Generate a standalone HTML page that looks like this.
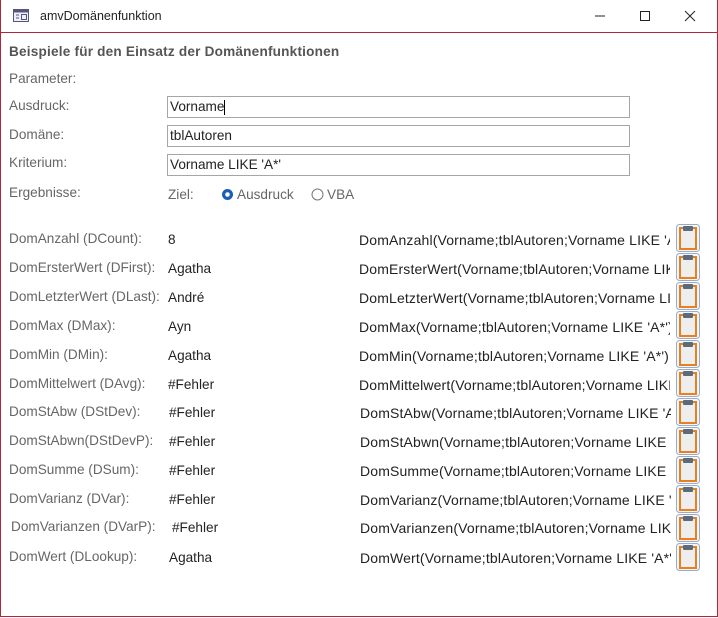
<!DOCTYPE html>
<html><head><meta charset="utf-8"><style>
body{margin:0;width:718px;height:618px;background:#fff;font-family:"Liberation Sans",sans-serif;position:relative;overflow:hidden}
.win{position:absolute;left:0;top:0;width:716px;height:616px;border:1px solid #b3263a;border-top:none}
.t{position:absolute;font-size:13.6px;white-space:nowrap}
.lbl{color:#666}
.val{color:#222}
.box{position:absolute;left:167px;width:459px;height:20px;border:1px solid #a6a6a6;font-size:13.6px;line-height:20px;padding-left:2px;color:#222}
.formula{position:absolute;left:359px;width:311px;overflow:hidden;font-size:14px;letter-spacing:0.15px;white-space:nowrap;color:#222}
</style></head><body>
<div class="win"></div>
<div style="position:absolute;left:1px;top:32px;width:716px;height:1px;background:#b3263a"></div>
<svg style="position:absolute;left:13px;top:9px" width="16" height="13"><rect x="0.5" y="0.5" width="15" height="12" fill="#eef" stroke="#557"/><rect x="0.5" y="0.5" width="15" height="3" fill="#557"/><line x1="3" y1="6" x2="6" y2="6" stroke="#557"/><line x1="3" y1="9" x2="6" y2="9" stroke="#557"/><rect x="8.5" y="5.5" width="5" height="5" fill="none" stroke="#557"/></svg>
<div class="t" style="left:40px;top:9px;font-size:12.5px;color:#222">amvDomänenfunktion</div>
<svg style="position:absolute;left:590px;top:8px" width="110" height="16"><line x1="5" y1="8" x2="15" y2="8" stroke="#222"/><rect x="50.5" y="3.5" width="9" height="9" fill="none" stroke="#222"/><path d="M95 3L105 13M105 3L95 13" stroke="#222"/></svg>
<div class="t" style="left:9px;top:44px;font-weight:bold;color:#555;font-size:13.6px;letter-spacing:0.2px">Beispiele für den Einsatz der Domänenfunktionen</div>
<div class="t lbl" style="left:9px;top:71px">Parameter:</div>
<div class="t lbl" style="left:9px;top:98px">Ausdruck:</div>
<div class="box" style="top:96px">Vorname<span style="display:inline-block;width:1px;height:15px;background:#000;vertical-align:middle"></span></div>
<div class="t lbl" style="left:9px;top:127px">Domäne:</div>
<div class="box" style="top:125px">tblAutoren</div>
<div class="t lbl" style="left:9px;top:155px">Kriterium:</div>
<div class="box" style="top:154px">Vorname LIKE 'A*'</div>
<div class="t lbl" style="left:9px;top:185px">Ergebnisse:</div>
<div class="t lbl" style="left:168px;top:187px">Ziel:</div>
<svg style="position:absolute;left:221px;top:188px" width="14" height="14"><circle cx="6.5" cy="6.5" r="5.5" fill="#1a5fb4"/><circle cx="6.5" cy="6.5" r="2.3" fill="#fff"/></svg>
<div class="t lbl" style="left:237px;top:187px">Ausdruck</div>
<svg style="position:absolute;left:311px;top:188px" width="14" height="14"><circle cx="6.5" cy="6.5" r="5.5" fill="#fff" stroke="#777"/></svg>
<div class="t lbl" style="left:327px;top:187px">VBA</div>

<div class="t lbl" style="left:9px;top:231px">DomAnzahl (DCount):</div><div class="t val" style="left:168px;top:232px">8</div><div class="formula" style="top:232px">DomAnzahl(Vorname;tblAutoren;Vorname LIKE 'A*')</div>
<div class="t lbl" style="left:9px;top:260px">DomErsterWert (DFirst):</div><div class="t val" style="left:168px;top:261px">Agatha</div><div class="formula" style="top:261px">DomErsterWert(Vorname;tblAutoren;Vorname LIKE 'A*')</div>
<div class="t lbl" style="left:9px;top:289px">DomLetzterWert (DLast):</div><div class="t val" style="left:168px;top:290px">André</div><div class="formula" style="top:290px">DomLetzterWert(Vorname;tblAutoren;Vorname LIKE 'A*')</div>
<div class="t lbl" style="left:9px;top:318px">DomMax (DMax):</div><div class="t val" style="left:168px;top:319px">Ayn</div><div class="formula" style="top:319px">DomMax(Vorname;tblAutoren;Vorname LIKE 'A*')</div>
<div class="t lbl" style="left:9px;top:347px">DomMin (DMin):</div><div class="t val" style="left:168px;top:348px">Agatha</div><div class="formula" style="top:348px">DomMin(Vorname;tblAutoren;Vorname LIKE 'A*')</div>
<div class="t lbl" style="left:9px;top:376px">DomMittelwert (DAvg):</div><div class="t val" style="left:168px;top:377px">#Fehler</div><div class="formula" style="top:377px">DomMittelwert(Vorname;tblAutoren;Vorname LIKE 'A*')</div>
<div class="t lbl" style="left:9px;top:404px">DomStAbw (DStDev):</div><div class="t val" style="left:169px;top:405px">#Fehler</div><div class="formula" style="top:405px;left:360px">DomStAbw(Vorname;tblAutoren;Vorname LIKE 'A*')</div>
<div class="t lbl" style="left:9px;top:433px">DomStAbwn(DStDevP):</div><div class="t val" style="left:169px;top:434px">#Fehler</div><div class="formula" style="top:434px;left:360px">DomStAbwn(Vorname;tblAutoren;Vorname LIKE 'A*')</div>
<div class="t lbl" style="left:9px;top:462px">DomSumme (DSum):</div><div class="t val" style="left:169px;top:463px">#Fehler</div><div class="formula" style="top:463px;left:360px">DomSumme(Vorname;tblAutoren;Vorname LIKE 'A*')</div>
<div class="t lbl" style="left:9px;top:491px">DomVarianz (DVar):</div><div class="t val" style="left:169px;top:492px">#Fehler</div><div class="formula" style="top:492px;left:360px">DomVarianz(Vorname;tblAutoren;Vorname LIKE 'A*')</div>
<div class="t lbl" style="left:11px;top:519px">DomVarianzen (DVarP):</div><div class="t val" style="left:172px;top:520px">#Fehler</div><div class="formula" style="top:520px;left:360px">DomVarianzen(Vorname;tblAutoren;Vorname LIKE 'A*')</div>
<div class="t lbl" style="left:9px;top:549px">DomWert (DLookup):</div><div class="t val" style="left:169px;top:550px">Agatha</div><div class="formula" style="top:550px;left:360px">DomWert(Vorname;tblAutoren;Vorname LIKE 'A*')</div>

<svg style="position:absolute;left:676px;top:224px" width="25" height="350">
<defs><g id="c"><rect x="0.5" y="0.5" width="23" height="27" rx="3" fill="#f4f6fa" stroke="#9aaccc"/><rect x="4" y="4" width="16" height="21" fill="#eee" stroke="#e8801c" stroke-width="2"/><rect x="7" y="2" width="10" height="5" rx="1" fill="#5b6b7b"/></g></defs>
<use href="#c" y="0"/><use href="#c" y="29"/><use href="#c" y="58"/><use href="#c" y="87"/><use href="#c" y="116"/><use href="#c" y="145"/><use href="#c" y="174"/><use href="#c" y="203"/><use href="#c" y="232"/><use href="#c" y="261"/><use href="#c" y="290"/><use href="#c" y="319"/>
</svg>
</body></html>
